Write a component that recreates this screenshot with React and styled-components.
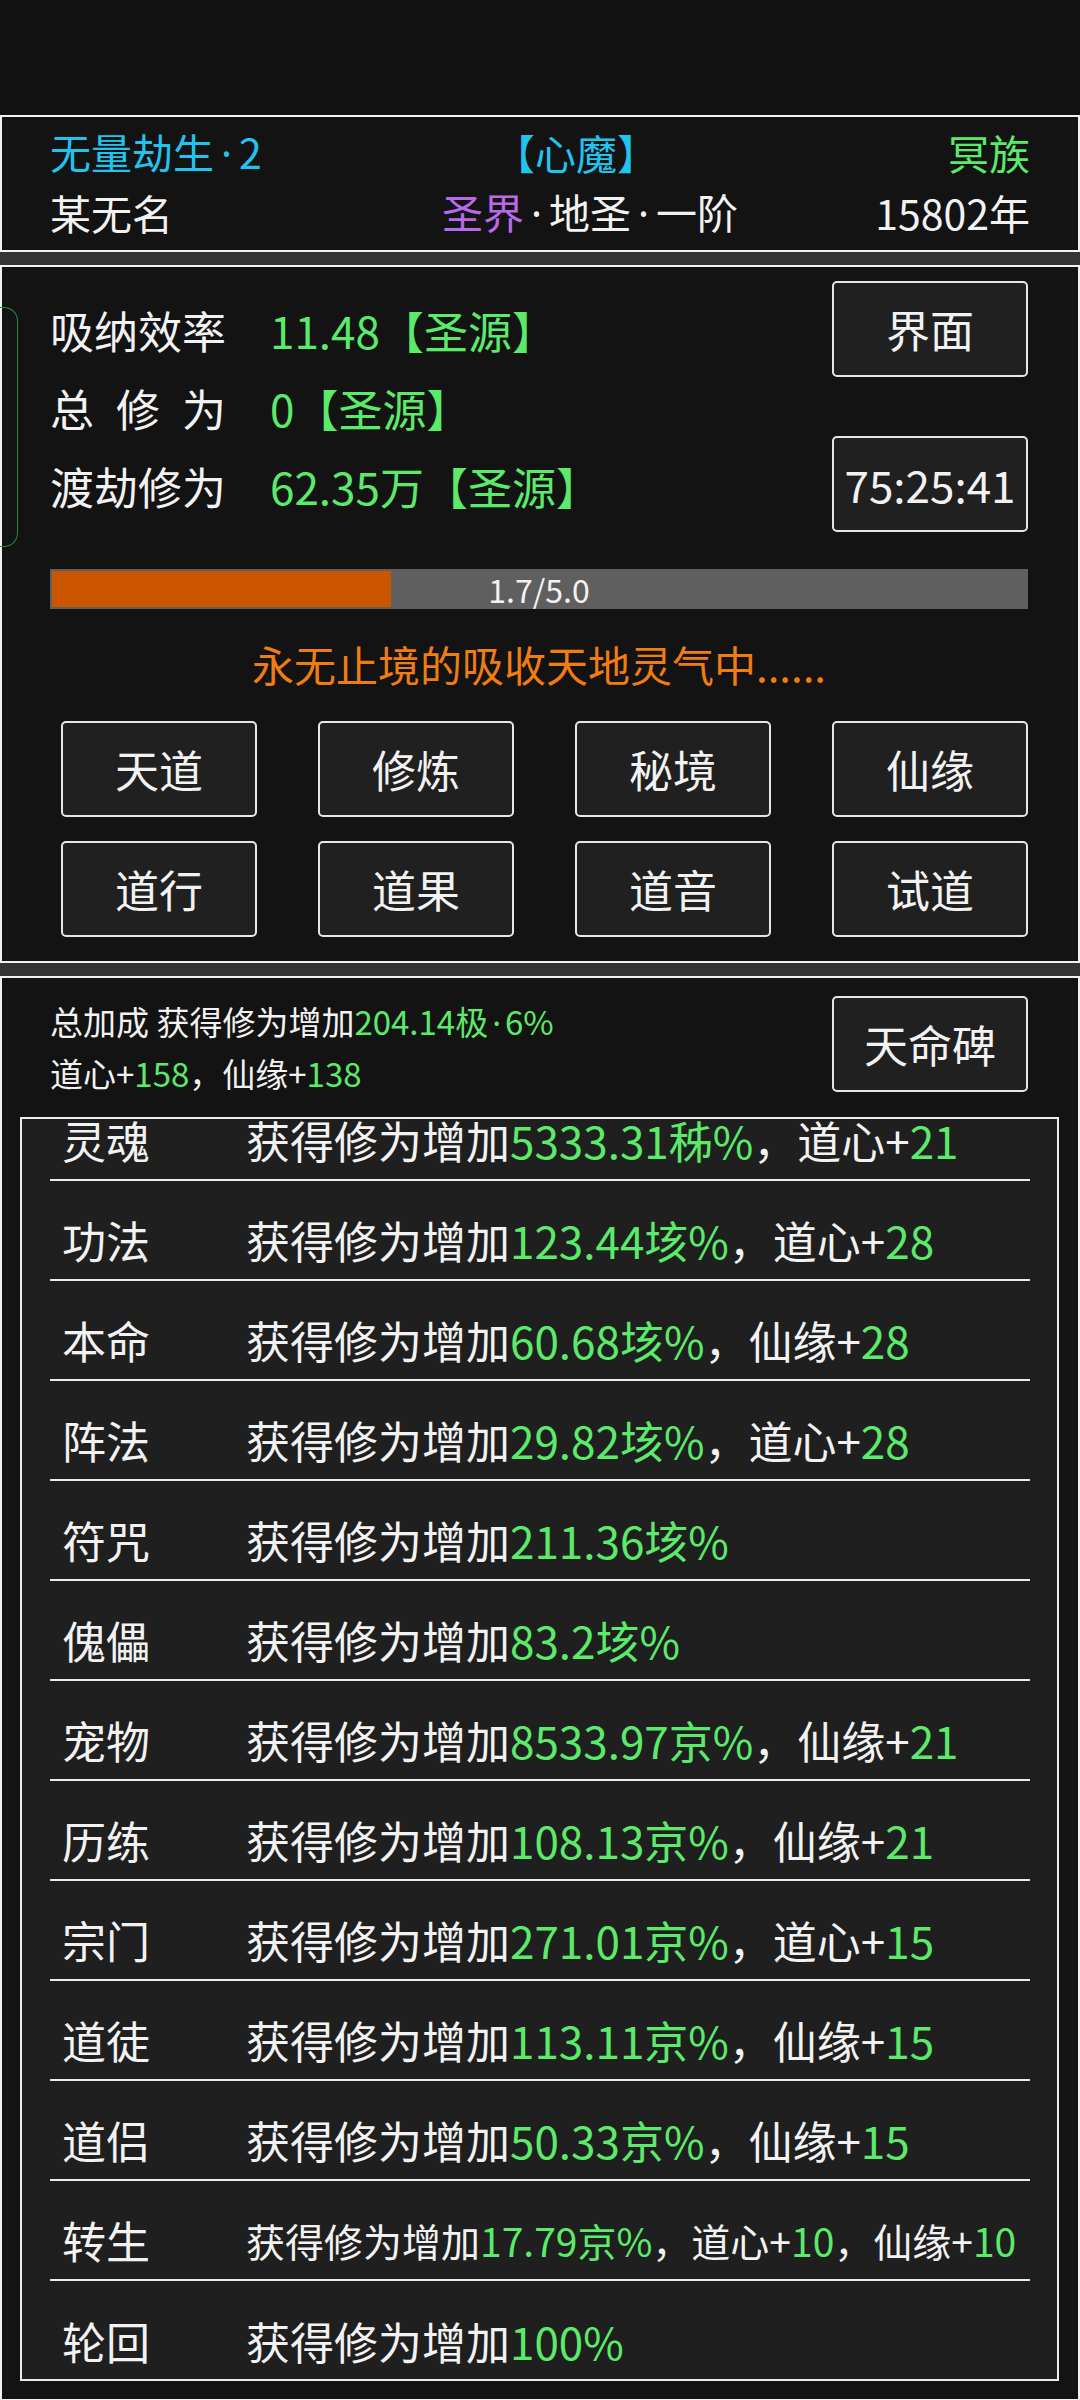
import styled, { createGlobalStyle } from "styled-components";

const GREEN = "#5cea6a";
const WHITE = "#f2f2f2";

const GlobalStyle = createGlobalStyle`
  html, body {
    margin: 0;
    padding: 0;
    background: #343434;
  }
  body {
    font-family: "Noto Sans CJK SC", "Noto Sans", sans-serif;
    color: ${WHITE};
  }
  * {
    box-sizing: border-box;
  }
`;

const statRows = [
  { label: "吸纳效率", value: "11.48【圣源】" },
  { label: "总修为", value: "0【圣源】", spread: true },
  { label: "渡劫修为", value: "62.35万【圣源】" },
];

const menu = ["天道", "修炼", "秘境", "仙缘", "道行", "道果", "道音", "试道"];

// even index = white, odd index = green
const bonuses = [
  { name: "灵魂", parts: ["获得修为增加", "5333.31秭%", "，道心+", "21"] },
  { name: "功法", parts: ["获得修为增加", "123.44垓%", "，道心+", "28"] },
  { name: "本命", parts: ["获得修为增加", "60.68垓%", "，仙缘+", "28"] },
  { name: "阵法", parts: ["获得修为增加", "29.82垓%", "，道心+", "28"] },
  { name: "符咒", parts: ["获得修为增加", "211.36垓%"] },
  { name: "傀儡", parts: ["获得修为增加", "83.2垓%"] },
  { name: "宠物", parts: ["获得修为增加", "8533.97京%", "，仙缘+", "21"] },
  { name: "历练", parts: ["获得修为增加", "108.13京%", "，仙缘+", "21"] },
  { name: "宗门", parts: ["获得修为增加", "271.01京%", "，道心+", "15"] },
  { name: "道徒", parts: ["获得修为增加", "113.11京%", "，仙缘+", "15"] },
  { name: "道侣", parts: ["获得修为增加", "50.33京%", "，仙缘+", "15"] },
  {
    name: "转生",
    parts: ["获得修为增加", "17.79京%", "，道心+", "10", "，仙缘+", "10"],
    small: true,
  },
  { name: "轮回", parts: ["获得修为增加", "100%"] },
];

const progress = { value: 1.74, max: 5.0 };

function Mixed({ parts }) {
  return parts.map((p, i) =>
    i % 2 ? <Green key={i}>{p}</Green> : <span key={i}>{p}</span>
  );
}

export default function App() {
  return (
    <Page>
      <GlobalStyle />
      <StatusArea />

      <Panel>
        <HeaderRows>
          <HeaderRow>
            <Cell $color="#22c4ee">
              无量劫生<Dot>·</Dot>2
            </Cell>
            <Cell $color="#22c4ee" $align="center">【心魔】</Cell>
            <Cell $color={GREEN} $align="right">冥族</Cell>
          </HeaderRow>
          <HeaderRow>
            <Cell>某无名</Cell>
            <Cell $align="center">
              <Purple>圣界</Purple>
              <Dot>·</Dot>地圣<Dot>·</Dot>一阶
            </Cell>
            <Cell $align="right">15802年</Cell>
          </HeaderRow>
        </HeaderRows>
      </Panel>

      <Panel $gap>
        <SideTab />
        <MainBody>
          <TopSection>
            <Stats>
              {statRows.map((r) => (
                <StatRow key={r.label}>
                  <StatLabel $spread={r.spread}>{r.label}</StatLabel>
                  <Green>{r.value}</Green>
                </StatRow>
              ))}
            </Stats>
            <SideButtons>
              <Button>界面</Button>
              <Button>75:25:41</Button>
            </SideButtons>
          </TopSection>

          <Bar>
            <Fill style={{ width: `${(progress.value / progress.max) * 100}%` }} />
            <BarText>
              {progress.value.toFixed(1)}/{progress.max.toFixed(1)}
            </BarText>
          </Bar>

          <Message>永无止境的吸收天地灵气中......</Message>

          <MenuGrid>
            {menu.map((m) => (
              <Button key={m}>{m}</Button>
            ))}
          </MenuGrid>
        </MainBody>
      </Panel>

      <Panel $gap>
        <Summary>
          <SummaryText>
            <SumLine>
              总加成 获得修为增加
              <Green>
                204.14极<Dot $small>·</Dot>6%
              </Green>
            </SumLine>
            <SumLine>
              <Mixed parts={["道心+", "158", "，仙缘+", "138"]} />
            </SumLine>
          </SummaryText>
          <Button>天命碑</Button>
        </Summary>

        <ListBox>
          <List>
            {bonuses.map((b) => (
              <BonusRow key={b.name}>
                <BonusName>{b.name}</BonusName>
                <BonusDesc $small={b.small}>
                  <Mixed parts={b.parts} />
                </BonusDesc>
              </BonusRow>
            ))}
          </List>
        </ListBox>
      </Panel>
    </Page>
  );
}

const Page = styled.div`
  width: 1080px;
  display: flex;
  flex-direction: column;
`;

const StatusArea = styled.div`
  height: 115px;
  background: #121212;
`;

const Panel = styled.section`
  position: relative;
  background: #131313;
  border: 2px solid ${WHITE};
  margin-top: ${(p) => (p.$gap ? "13px" : "0")};
`;

const HeaderRows = styled.div`
  display: flex;
  flex-direction: column;
  gap: 4px;
  padding: 6px 48px 11px 48px;
`;

const HeaderRow = styled.div`
  display: grid;
  grid-template-columns: 392px 268px 1fr;
  height: 56px;
  align-items: center;
  font-size: 41px;
  line-height: 56px;
`;

const Cell = styled.div`
  color: ${(p) => p.$color || WHITE};
  text-align: ${(p) => p.$align || "left"};
  white-space: nowrap;
`;

const Dot = styled.span`
  font-family: "Noto Sans", "DejaVu Sans", sans-serif;
  margin: 0 ${(p) => (p.$small ? "4px" : "7px")};
`;

const Purple = styled.span`
  color: #b96ae8;
`;

const Green = styled.span`
  color: ${GREEN};
`;

const SideTab = styled.div`
  position: absolute;
  left: -12px;
  top: 40px;
  width: 28px;
  height: 240px;
  border: 1.5px solid #2d8a3c;
  border-left: none;
  border-radius: 0 14px 14px 0;
`;

const MainBody = styled.div`
  display: flex;
  flex-direction: column;
  padding: 14px 50px 24px 48px;
`;

const TopSection = styled.div`
  display: flex;
  justify-content: space-between;
  height: 251px;
`;

const Stats = styled.div`
  display: flex;
  flex-direction: column;
  padding-top: 10px;
`;

const StatRow = styled.div`
  display: flex;
  align-items: center;
  height: 78px;
  font-size: 44px;
  white-space: nowrap;
`;

const StatLabel = styled.span`
  width: 220px;
  flex-shrink: 0;
  letter-spacing: ${(p) => (p.$spread ? "22px" : "0")};
`;

const SideButtons = styled.div`
  display: flex;
  flex-direction: column;
  gap: 59px;
`;

const Button = styled.button`
  width: 196px;
  height: 96px;
  padding: 0;
  background: #202020;
  border: 2px solid #e6e6e6;
  border-radius: 5px;
  color: ${WHITE};
  font-family: "Noto Sans CJK SC", "Noto Sans", sans-serif;
  font-size: 44px;
  line-height: 1;
  white-space: nowrap;
  flex-shrink: 0;
`;

const Bar = styled.div`
  position: relative;
  margin-top: 37px;
  height: 40px;
  padding: 2px;
  background: #5f5f5f;
`;

const Fill = styled.div`
  height: 100%;
  background: #cc5500;
`;

const BarText = styled.div`
  position: absolute;
  inset: 0;
  display: flex;
  align-items: center;
  justify-content: center;
  font-size: 32px;
  color: ${WHITE};
`;

const Message = styled.div`
  margin-top: 25px;
  height: 60px;
  line-height: 60px;
  text-align: center;
  font-size: 42px;
  color: #f07d12;
`;

const MenuGrid = styled.div`
  margin-top: 27px;
  display: grid;
  grid-template-columns: repeat(4, 196px);
  column-gap: 61px;
  row-gap: 24px;
  padding-left: 11px;
`;

const Summary = styled.div`
  display: flex;
  justify-content: space-between;
  padding: 18px 50px 0 48px;
`;

const SummaryText = styled.div`
  display: flex;
  flex-direction: column;
`;

const SumLine = styled.div`
  font-size: 33px;
  line-height: 50px;
  white-space: nowrap;
`;

const ListBox = styled.div`
  margin: 19px 19px 18px 18px;
  height: 1264px;
  border: 2px solid #ececec;
  background: #1f1f1f;
  overflow: hidden;
`;

const List = styled.div`
  margin-top: -38px;
  display: flex;
  flex-direction: column;
`;

const BonusRow = styled.div`
  display: flex;
  align-items: center;
  height: 100px;
  padding-top: 20px;
  margin: 0 27px 0 28px;
  border-bottom: 2px solid #ececec;
  white-space: nowrap;
  line-height: 1;

  &:last-child {
    border-bottom: none;
  }
`;

const BonusName = styled.span`
  width: 196px;
  padding-left: 12px;
  flex-shrink: 0;
  font-size: 44px;
`;

const BonusDesc = styled.span`
  font-size: ${(p) => (p.$small ? "39px" : "44px")};
`;
